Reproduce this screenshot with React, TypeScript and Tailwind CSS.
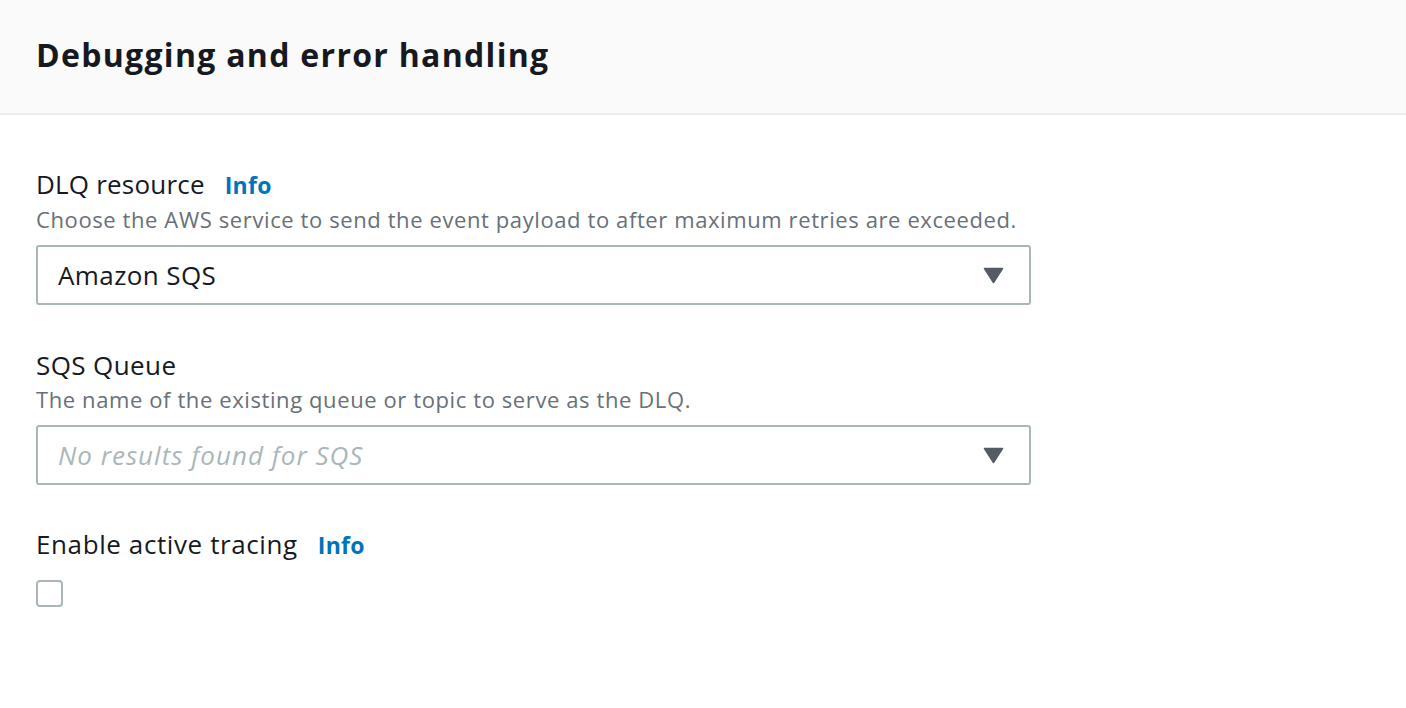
const fontStack = { fontFamily: '"Open Sans", "Noto Sans", Arial, sans-serif' };

function Caret() {
  return (
    <svg className="w-[21px] h-[17px] text-[#545b64]" viewBox="0 0 21 17" fill="currentColor">
      <path d="M1.5 1.5h18l-9 14z" strokeLinejoin="round" stroke="currentColor" strokeWidth={1.5} />
    </svg>
  );
}

function InfoLink() {
  return <span className="ml-5 text-[23px] font-bold tracking-[0.3px] text-[#0073bb]">Info</span>;
}

function Select({ value, placeholder }: { value?: string; placeholder?: string }) {
  return (
    <div className="mt-[11px] h-[60px] border-2 border-[#aab7b8] rounded-[3px] flex items-center justify-between pl-[20px] pr-[25px]">
      {value ? (
        <span className="text-[26px] tracking-[0.4px]">{value}</span>
      ) : (
        <span className="text-[26px] italic tracking-[1px] text-[#aab7b8]">{placeholder}</span>
      )}
      <Caret />
    </div>
  );
}

export default function App() {
  return (
    <div className="min-h-screen bg-white text-[#16191f]" style={fontStack}>
      {/* Header */}
      <div className="h-[115px] bg-[#fafafa] border-b-2 border-[#eaeded] px-9 flex items-center">
        <h2 className="text-[32px] font-bold tracking-[1.3px] pb-1">Debugging and error handling</h2>
      </div>

      <div className="px-9 pt-[52px] w-[1067px]">
        {/* DLQ resource */}
        <div className="flex items-baseline leading-[34px]">
          <span className="text-[26px] tracking-[0.2px]">DLQ resource</span>
          <InfoLink />
        </div>
        <p className="mt-[2px] text-[22px] leading-[30px] tracking-[0.6px] text-[#687078]">
          Choose the AWS service to send the event payload to after maximum retries are exceeded.
        </p>
        <Select value="Amazon SQS" />

        {/* SQS Queue */}
        <div className="mt-[43px] text-[26px] leading-[34px] tracking-[0.4px]">SQS Queue</div>
        <p className="mt-[2px] text-[22px] leading-[30px] tracking-[0.6px] text-[#687078]">
          The name of the existing queue or topic to serve as the DLQ.
        </p>
        <Select placeholder="No results found for SQS" />

        {/* Active tracing */}
        <div className="mt-[42px] flex items-baseline leading-[34px]">
          <span className="text-[26px] tracking-[0.6px]">Enable active tracing</span>
          <InfoLink />
        </div>
        <div className="mt-[18px] w-[27px] h-[27px] border-2 border-[#aab7b8] rounded-[4px]" />
      </div>
    </div>
  );
}
